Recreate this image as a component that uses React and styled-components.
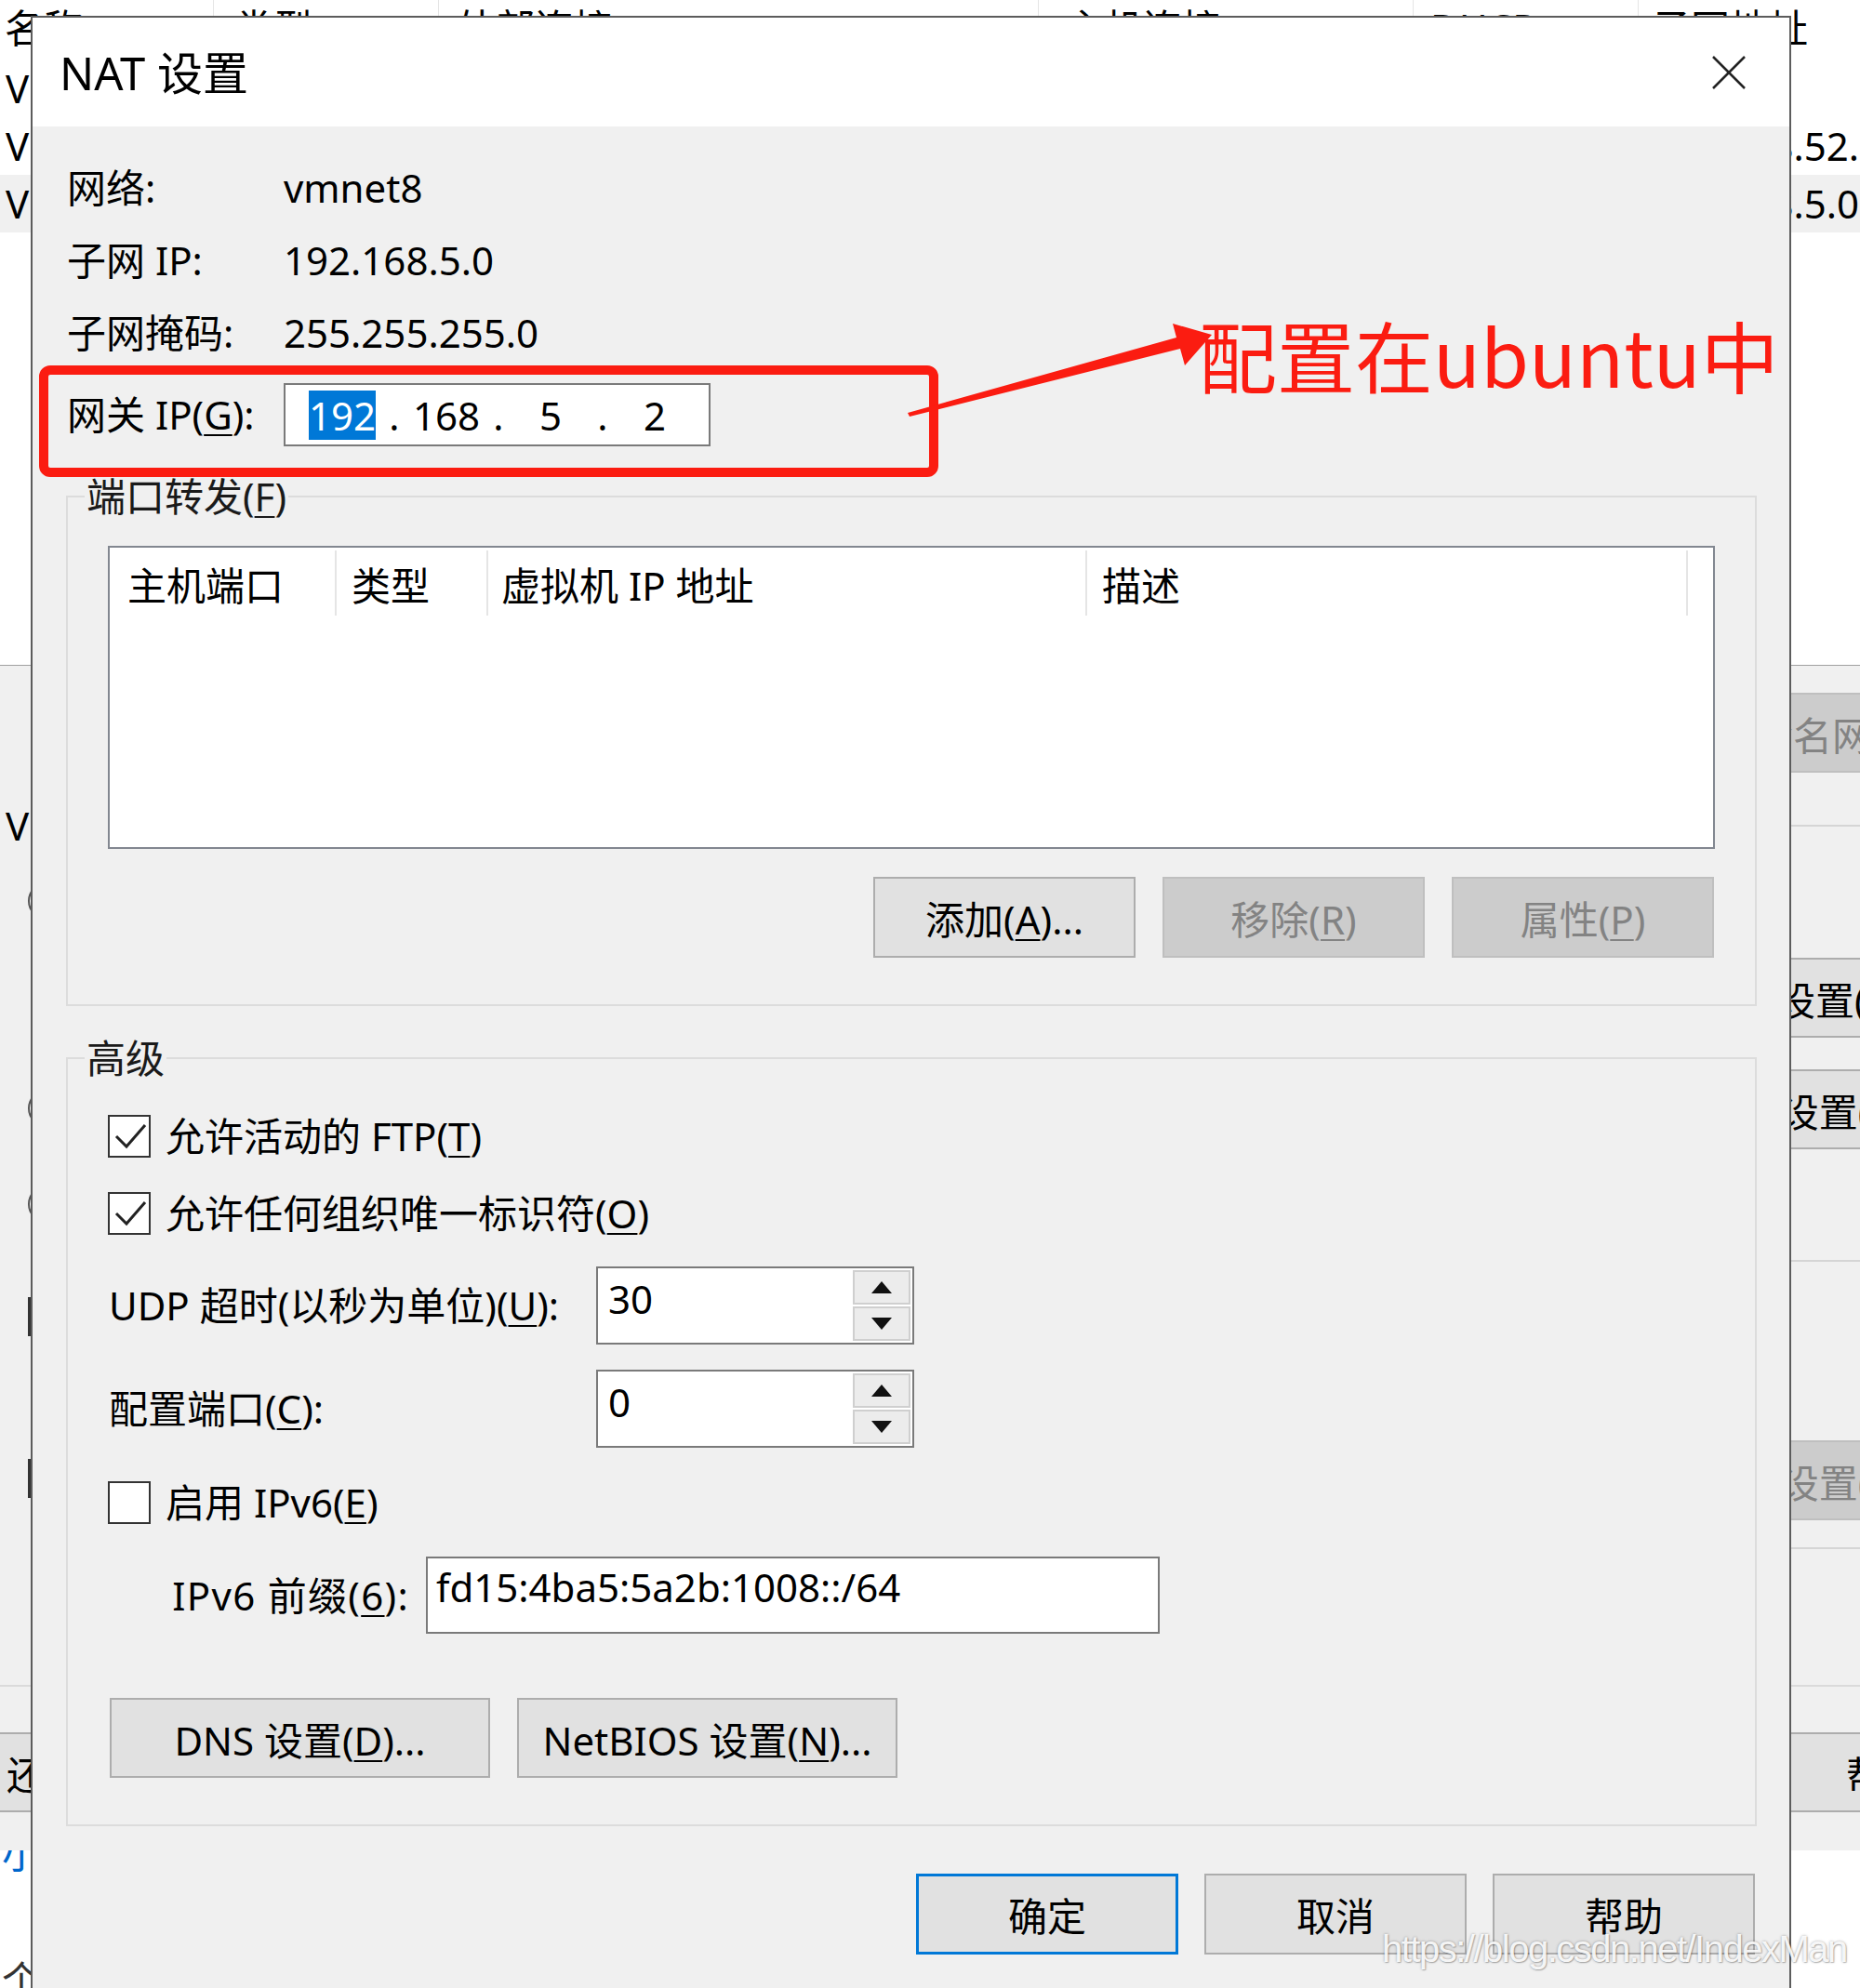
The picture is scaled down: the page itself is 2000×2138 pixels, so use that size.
import React from "react";
import styled, { createGlobalStyle } from "styled-components";

const FONT = `"Noto Sans", "Noto Sans CJK SC", sans-serif`;

const GlobalStyle = createGlobalStyle`
  html, body { margin: 0; padding: 0; background: #fff; }
  body { font-family: ${FONT}; }
  *, *::before, *::after { box-sizing: border-box; }
`;

const Page = styled.div`
  position: relative;
  width: 2000px;
  height: 2138px;
  overflow: hidden;
  background: #fff;
  font-family: ${FONT};
  font-size: 42px;
  color: #000;
`;

/* ---------- background window (Virtual Network Editor) ---------- */
const BgWindow = styled.div`
  display: flex;
  flex-direction: column;
  width: 2000px;
  height: 2138px;
`;
const BgHeader = styled.div`
  display: flex;
  height: 64px;
  background: #fff;
`;
const BgRow = styled.div`
  display: flex;
  height: 62px;
  background: ${(p) => (p.$selected ? "#f0f0f0" : "#fff")};
`;
const BgCell = styled.div`
  flex: 0 0 ${(p) => p.$w}px;
  padding-left: ${(p) => p.$pad}px;
  line-height: ${(p) => p.$lh}px;
  white-space: nowrap;
  overflow: hidden;
  border-right: ${(p) => (p.$sep ? "1px solid #e5e5e5" : "none")};
`;
const BgListRest = styled.div`
  flex: 0 0 466px;
  background: #fff;
  border-bottom: 1px solid #a0a0a0;
`;
const BgPanel = styled.div`
  flex: 0 0 1096px;
  display: flex;
  justify-content: space-between;
  background: #f0f0f0;
`;
const BgLeftStack = styled.div`
  display: flex;
  flex-direction: column;
  align-items: flex-start;
  width: 240px;
`;
const BgRightStack = styled.div`
  display: flex;
  flex-direction: column;
  width: 240px;
`;
const BgLabel = styled.div`
  margin-top: ${(p) => p.$mt}px;
  margin-left: 6px;
  line-height: 50px;
  white-space: nowrap;
`;
const BgRadio = styled.span`
  display: block;
  margin-top: ${(p) => p.$mt}px;
  margin-left: 30px;
  width: 40px;
  height: 40px;
  border-radius: 50%;
  border: 2px solid #555;
  background: #fff;
`;
const BgCheck = styled.span`
  display: block;
  margin-top: ${(p) => p.$mt}px;
  margin-left: 30px;
  width: 42px;
  height: 42px;
  border: 3px solid #333;
  background: #fff;
`;
const BgButton = styled.div`
  flex: 0 0 auto;
  margin-top: ${(p) => p.$mt || 0}px;
  margin-left: ${(p) => p.$ml || 0}px;
  width: 320px;
  height: 86px;
  padding-left: ${(p) => p.$pad}px;
  display: flex;
  align-items: center;
  white-space: nowrap;
  background: ${(p) => (p.$disabled ? "#cccccc" : "#e1e1e1")};
  border: 2px solid ${(p) => (p.$disabled ? "#bfbfbf" : "#adadad")};
  color: ${(p) => (p.$disabled ? "#838383" : "#000")};
`;
const BgDivider = styled.div`
  margin-top: ${(p) => p.$mt}px;
  width: 320px;
  height: 2px;
  background: #d5d5d5;
`;
const BgFooter = styled.div`
  flex: 0 0 178px;
  display: flex;
  justify-content: space-between;
  align-items: flex-start;
  padding-top: 49px;
  background: #f0f0f0;
  border-top: 2px solid #dadada;
`;
const BgFooterSlot = styled.div`
  width: 240px;
  display: flex;
`;
const BgBottom = styled.div`
  flex: 1;
  background: #fff;
  overflow: hidden;
  padding-left: 2px;
`;
const BgNote = styled.div`
  margin-top: ${(p) => p.$mt}px;
  line-height: 50px;
  color: ${(p) => p.$color};
  white-space: nowrap;
`;

/* ---------- dialog ---------- */
const Dialog = styled.section`
  position: absolute;
  left: 33px;
  top: 17px;
  width: 1893px;
  height: 2200px;
  display: flex;
  flex-direction: column;
  background: #f0f0f0;
  border: 2px solid #5c5c5c;
`;
const TitleBar = styled.header`
  flex: 0 0 117px;
  display: flex;
  align-items: center;
  justify-content: space-between;
  padding: 0 46px 0 29px;
  background: #fff;
`;
const Title = styled.h1`
  margin: 0;
  font-size: 49px;
  font-weight: 400;
  line-height: 60px;
`;
const CloseButton = styled.button`
  width: 38px;
  height: 38px;
  padding: 0;
  border: none;
  background: transparent;
  display: flex;
  align-items: center;
  justify-content: center;
`;
const Body = styled.div`
  display: flex;
  flex-direction: column;
  padding: 27px 35px 0 36px;
`;
const InfoRow = styled.div`
  display: flex;
  align-items: center;
  height: ${(p) => p.$h}px;
  margin-top: ${(p) => p.$mt || 0}px;
  padding-left: 1px;
  line-height: 50px;
  white-space: nowrap;
`;
const InfoLabel = styled.span`
  flex: 0 0 233px;
`;
const U = styled.span`
  text-decoration: underline;
  text-decoration-thickness: 2px;
  text-underline-offset: 5px;
`;
const IpBox = styled.div`
  width: 459px;
  height: 68px;
  display: flex;
  align-items: center;
  padding-left: 11px;
  background: #fff;
  border: 2px solid #7a7a7a;
`;
const IpField = styled.span`
  flex: 0 0 100px;
  text-align: center;
  line-height: 53px;
`;
const IpDot = styled.span`
  flex: 0 0 12px;
  text-align: center;
  line-height: 53px;
`;
const Selected = styled.span`
  display: inline-block;
  background: #0078d7;
  color: #fff;
  line-height: 53px;
`;
const Group = styled.fieldset`
  margin: ${(p) => p.$mt}px 0 0;
  padding: ${(p) => p.$pt}px 43px ${(p) => p.$pb}px 43px;
  border: 2px solid #dcdcdc;
  min-width: 0;
  display: flex;
  flex-direction: column;
`;
const GroupLegend = styled.legend`
  margin-left: -25px;
  padding: 0 2px;
  line-height: 50px;
  color: #1a1a1a;
  white-space: nowrap;
`;
const ListView = styled.div`
  height: 326px;
  background: #fff;
  border: 2px solid #828790;
`;
const ListHeader = styled.div`
  display: flex;
  align-items: flex-start;
`;
const HeaderCell = styled.div`
  flex: 0 0 ${(p) => p.$w}px;
  height: 70px;
  margin-top: 3px;
  padding-left: ${(p) => p.$pad}px;
  display: flex;
  align-items: center;
  white-space: nowrap;
  border-right: 2px solid #e5e5e5;
`;
const ButtonRow = styled.div`
  display: flex;
  justify-content: ${(p) => p.$justify || "flex-end"};
  gap: ${(p) => p.$gap}px;
  margin-top: ${(p) => p.$mt}px;
  padding-left: ${(p) => p.$pl || 0}px;
  padding-right: ${(p) => p.$pr || 0}px;
`;
const Button = styled.button`
  width: ${(p) => p.$w}px;
  height: ${(p) => p.$h || 86}px;
  padding: 0;
  font-family: ${FONT};
  font-size: 42px;
  white-space: nowrap;
  background: ${(p) => (p.disabled ? "#cccccc" : "#e1e1e1")};
  color: ${(p) => (p.disabled ? "#838383" : "#000")};
  border: ${(p) =>
    p.$default ? "3px solid #0078d7" : p.disabled ? "2px solid #bfbfbf" : "2px solid #adadad"};
`;
const CheckRow = styled.label`
  display: flex;
  align-items: center;
  gap: 16px;
  height: 46px;
  margin-top: ${(p) => p.$mt}px;
  line-height: 46px;
  white-space: nowrap;
`;
const CheckBox = styled.span`
  flex: 0 0 46px;
  height: 46px;
  border: 2px solid #333;
  background: #fff;
  display: flex;
`;
const FieldRow = styled.div`
  display: flex;
  align-items: center;
  margin-top: ${(p) => p.$mt}px;
  line-height: 46px;
  white-space: nowrap;
`;
const FieldLabel = styled.span`
  flex: 0 0 ${(p) => p.$w}px;
  padding-left: ${(p) => p.$pl || 0}px;
  padding-right: ${(p) => p.$pr || 0}px;
  text-align: ${(p) => p.$align || "left"};
  letter-spacing: ${(p) => p.$ls || 0}px;
`;
const SpinBox = styled.div`
  width: 342px;
  height: 84px;
  display: flex;
  background: #fff;
  border: 2px solid #7a7a7a;
`;
const SpinEdit = styled.div`
  flex: 1;
  padding: 8px 11px 0;
  line-height: 50px;
`;
const SpinButtons = styled.div`
  flex: 0 0 64px;
  display: flex;
  flex-direction: column;
  gap: 2px;
  padding: 2px 2px 2px 0;
`;
const SpinBtn = styled.span`
  flex: 1;
  display: flex;
  align-items: center;
  justify-content: center;
  background: #ececec;
  border: 2px solid #cfcfcf;
`;
const TextBox = styled.div`
  width: 789px;
  height: 83px;
  padding: 6px 9px 0;
  line-height: 50px;
  background: #fff;
  border: 2px solid #7a7a7a;
`;

/* ---------- annotations ---------- */
const RedBox = styled.div`
  position: absolute;
  left: 42px;
  top: 393px;
  width: 967px;
  height: 120px;
  border: 10px solid #fb1c11;
  border-radius: 12px;
`;
const ArrowSvg = styled.svg`
  position: absolute;
  left: 960px;
  top: 330px;
`;
const RedNote = styled.div`
  position: absolute;
  left: 1289px;
  top: 339px;
  font-family: "Noto Sans CJK SC", sans-serif;
  font-size: 84px;
  line-height: 1;
  color: #fb1c11;
  white-space: nowrap;
`;
const Watermark = styled.div`
  position: absolute;
  left: 1486px;
  top: 2072px;
  font-family: "Liberation Sans", sans-serif;
  font-size: 40px;
  line-height: 48px;
  letter-spacing: -1.5px;
  color: rgba(255, 255, 255, 0.92);
  text-shadow: 0 0 3px rgba(0, 0, 0, 0.35), 1px 1px 1px rgba(0, 0, 0, 0.2);
  white-space: nowrap;
`;

const BG_COLS = [
  { w: 230, hp: 5, rp: 6 },
  { w: 242, hp: 22, rp: 22 },
  { w: 645, hp: 19, rp: 19 },
  { w: 403, hp: 28, rp: 28 },
  { w: 242, hp: 18, rp: 18 },
  { w: 238, hp: 14, rp: 11 },
];
const BG_HEAD = ["名称", "类型", "外部连接", "主机连接", "DHCP", "子网地址"];
/* only the first and last columns are visible beside the dialog */
const BG_ROWS = [
  ["VMnet0", "", "", "", "", ""],
  ["VMnet1", "", "", "", "", "192.168.52.0"],
  ["VMnet8", "", "", "", "", "192.168.5.0"],
];

const LIST_COLS = [
  { w: 244, pad: 19, label: "主机端口" },
  { w: 163, pad: 16, label: "类型" },
  { w: 644, pad: 14, label: "虚拟机 IP 地址" },
  { w: 646, pad: 16, label: "描述" },
];

function Check({ checked }) {
  return (
    <CheckBox>
      {checked && (
        <svg width="42" height="42" viewBox="0 0 42 42">
          <polyline points="7,21 18,32 38,9" fill="none" stroke="#222" strokeWidth="3" />
        </svg>
      )}
    </CheckBox>
  );
}

function Spinner({ value }) {
  return (
    <SpinBox>
      <SpinEdit>{value}</SpinEdit>
      <SpinButtons>
        <SpinBtn>
          <svg width="22" height="13" viewBox="0 0 22 13">
            <polygon points="11,0 22,13 0,13" fill="#111" />
          </svg>
        </SpinBtn>
        <SpinBtn>
          <svg width="22" height="13" viewBox="0 0 22 13">
            <polygon points="0,0 22,0 11,13" fill="#111" />
          </svg>
        </SpinBtn>
      </SpinButtons>
    </SpinBox>
  );
}

export default function App() {
  return (
    <>
      <GlobalStyle />
      <Page>
        <BgWindow>
          <BgHeader>
            {BG_HEAD.map((h, i) => (
              <BgCell key={h} $w={BG_COLS[i].w} $pad={BG_COLS[i].hp} $lh={60} $sep={i < 5}>
                {h}
              </BgCell>
            ))}
          </BgHeader>
          {BG_ROWS.map((r, ri) => (
            <BgRow key={r[0]} $selected={ri === 2}>
              {r.map((c, i) => (
                <BgCell key={i} $w={BG_COLS[i].w} $pad={BG_COLS[i].rp} $lh={62}>
                  {c}
                </BgCell>
              ))}
            </BgRow>
          ))}
          <BgListRest />
          <BgPanel>
            <BgLeftStack>
              <BgLabel $mt={147}>VMnet 信息</BgLabel>
              <BgRadio $mt={36} />
              <BgRadio $mt={183} />
              <BgRadio $mt={63} />
              <BgCheck $mt={80} />
              <BgCheck $mt={132} />
            </BgLeftStack>
            <BgRightStack>
              <BgButton $mt={29} $pad={82} $disabled>重命名网络(W)...</BgButton>
              <BgDivider $mt={56} />
              <BgButton $mt={141} $pad={58}>NAT 设置(S)...</BgButton>
              <BgButton $mt={34} $pad={27}>DHCP 设置(P)...</BgButton>
              <BgDivider $mt={119} />
              <BgButton $mt={192} $pad={27} $disabled>DHCP 设置(P)...</BgButton>
              <BgDivider $mt={29} />
            </BgRightStack>
          </BgPanel>
          <BgFooter>
            <BgFooterSlot>
              <BgButton $ml={-4} $pad={9}>还原默认设置(R)</BgButton>
            </BgFooterSlot>
            <BgFooterSlot>
              <BgButton $pad={223}>帮助(H)</BgButton>
            </BgFooterSlot>
          </BgFooter>
          <BgBottom>
            <BgNote $mt={-22} $color="#0066cc">小</BgNote>
            <BgNote $mt={86} $color="#333">个</BgNote>
          </BgBottom>
        </BgWindow>

        <Dialog>
          <TitleBar>
            <Title>NAT 设置</Title>
            <CloseButton aria-label="关闭">
              <svg width="38" height="38" viewBox="0 0 38 38">
                <line x1="2" y1="2" x2="36" y2="36" stroke="#222" strokeWidth="2.5" />
                <line x1="36" y1="2" x2="2" y2="36" stroke="#222" strokeWidth="2.5" />
              </svg>
            </CloseButton>
          </TitleBar>
          <Body>
            <InfoRow $h={78}>
              <InfoLabel>网络:</InfoLabel>
              <span>vmnet8</span>
            </InfoRow>
            <InfoRow $h={78}>
              <InfoLabel>子网 IP:</InfoLabel>
              <span>192.168.5.0</span>
            </InfoRow>
            <InfoRow $h={78}>
              <InfoLabel>子网掩码:</InfoLabel>
              <span>255.255.255.0</span>
            </InfoRow>
            <InfoRow $h={68} $mt={15}>
              <InfoLabel>
                网关 IP(<U>G</U>):
              </InfoLabel>
              <IpBox>
                <IpField>
                  <Selected>192</Selected>
                </IpField>
                <IpDot>.</IpDot>
                <IpField>168</IpField>
                <IpDot>.</IpDot>
                <IpField>5</IpField>
                <IpDot>.</IpDot>
                <IpField>2</IpField>
              </IpBox>
            </InfoRow>

            <Group $mt={29} $pt={28} $pb={50}>
              <GroupLegend>
                端口转发(<U>F</U>)
              </GroupLegend>
              <ListView>
                <ListHeader>
                  {LIST_COLS.map((c) => (
                    <HeaderCell key={c.label} $w={c.w} $pad={c.pad}>
                      {c.label}
                    </HeaderCell>
                  ))}
                </ListHeader>
              </ListView>
              <ButtonRow $gap={29} $mt={30} $pr={1}>
                <Button $w={282} $h={87}>
                  添加(<U>A</U>)...
                </Button>
                <Button $w={282} $h={87} disabled>
                  移除(<U>R</U>)
                </Button>
                <Button $w={282} $h={87} disabled>
                  属性(<U>P</U>)
                </Button>
              </ButtonRow>
            </Group>

            <Group $mt={31} $pt={0} $pb={50}>
              <GroupLegend>高级</GroupLegend>
              <CheckRow $mt={36}>
                <Check checked />
                <span>
                  允许活动的 FTP(<U>T</U>)
                </span>
              </CheckRow>
              <CheckRow $mt={37}>
                <Check checked />
                <span>
                  允许任何组织唯一标识符(<U>O</U>)
                </span>
              </CheckRow>
              <FieldRow $mt={34}>
                <FieldLabel $w={525} $pl={1}>
                  UDP 超时(以秒为单位)(<U>U</U>):
                </FieldLabel>
                <Spinner value="30" />
              </FieldRow>
              <FieldRow $mt={27}>
                <FieldLabel $w={525} $pl={1}>
                  配置端口(<U>C</U>):
                </FieldLabel>
                <Spinner value="0" />
              </FieldRow>
              <CheckRow $mt={36}>
                <Check />
                <span>
                  启用 IPv6(<U>E</U>)
                </span>
              </CheckRow>
              <FieldRow $mt={35}>
                <FieldLabel $w={342} $pr={18} $align="right" $ls={1.3}>
                  IPv6 前缀(<U>6</U>):
                </FieldLabel>
                <TextBox>fd15:4ba5:5a2b:1008::/64</TextBox>
              </FieldRow>
              <ButtonRow $justify="flex-start" $gap={29} $mt={69} $pl={2}>
                <Button $w={409}>
                  DNS 设置(<U>D</U>)...
                </Button>
                <Button $w={409}>
                  NetBIOS 设置(<U>N</U>)...
                </Button>
              </ButtonRow>
            </Group>

            <ButtonRow $gap={28} $mt={51} $pr={2}>
              <Button $w={282} $h={87} $default>
                确定
              </Button>
              <Button $w={282} $h={87}>
                取消
              </Button>
              <Button $w={282} $h={87}>
                帮助
              </Button>
            </ButtonRow>
          </Body>
        </Dialog>

        <RedBox />
        <ArrowSvg width="360" height="130" viewBox="0 0 360 130">
          <polygon
            points="16,114 305,33 301,18 343,30 314,63 309,45 18,118"
            fill="#fb1c11"
          />
        </ArrowSvg>
        <RedNote>配置在ubuntu中</RedNote>
        <Watermark>https://blog.csdn.net/IndexMan</Watermark>
      </Page>
    </>
  );
}
